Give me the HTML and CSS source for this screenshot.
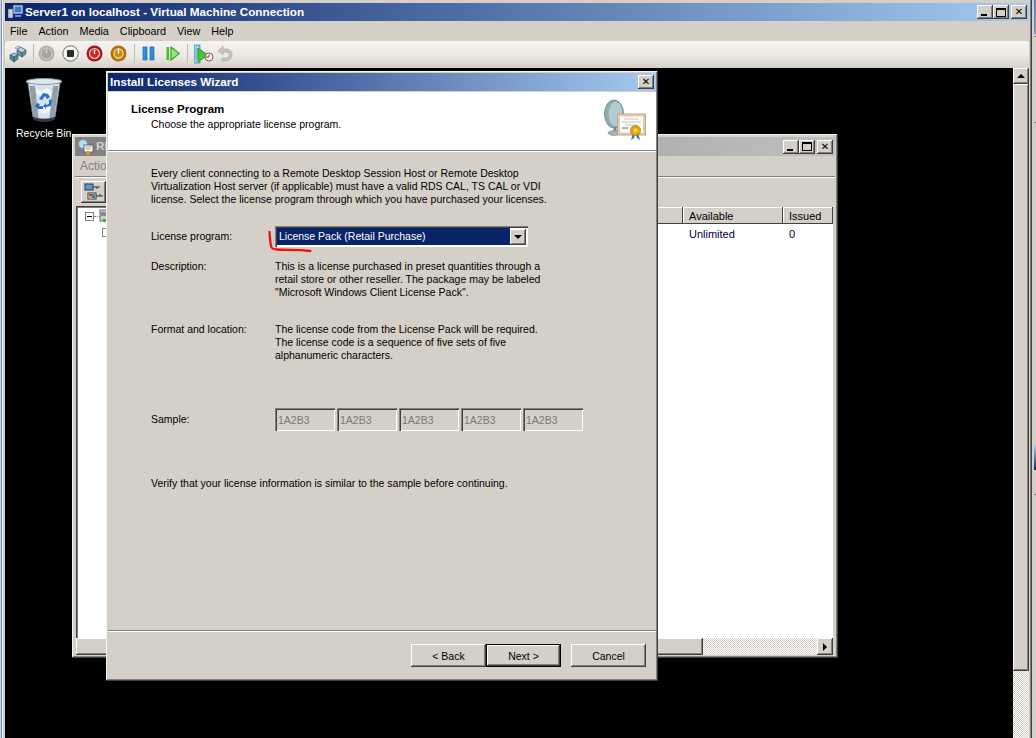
FILE: index.html
```html
<!DOCTYPE html>
<html lang="en">
<head>
<meta charset="utf-8">
<title>Server1 on localhost - Virtual Machine Connection</title>
<link rel="stylesheet" href="styles.css">
</head>
<body>
<div class="screen">
  <div class="vm">
    <div class="vm-title titlebar">
      <svg class="ico16" width="16" height="16" viewBox="0 0 16 16"><rect x="5" y="1" width="10" height="9" fill="#dfe8f5" stroke="#1c3f86"/><rect x="6.5" y="2.5" width="7" height="6" fill="#3f74c8"/><rect x="0" y="5" width="5" height="9" fill="#c8ccd4" stroke="#50586a" stroke-width=".6"/><rect x="7" y="11" width="6" height="2" fill="#88a"/></svg>
      <span class="title-text">Server1 on localhost - Virtual Machine Connection</span>
      <span class="caps">
        <button class="cap"><i class="g-min"></i></button>
        <button class="cap"><i class="g-max"></i></button>
        <button class="cap cap-x">✕</button>
      </span>
    </div>
    <div class="menubar">
      <span>File</span><span>Action</span><span>Media</span><span>Clipboard</span><span>View</span><span>Help</span>
    </div>
    <div class="toolbar">
      <svg width="18" height="18" viewBox="0 0 18 18"><path d="M1 10l4-2 4 2-4 2z" fill="#a9c4cc" stroke="#3a5a66" stroke-width=".7"/><path d="M1 10v4l4 3v-5zM9 10v4l-4 3v-5z" fill="#5e8a98" stroke="#3a5a66" stroke-width=".7"/><path d="M8 5l4-3 5 3-4 3z" fill="#b7d0d8" stroke="#3a5a66" stroke-width=".7"/><path d="M8 5v4l5 3V8zM17 5v4l-4 3V8z" fill="#6b96a4" stroke="#3a5a66" stroke-width=".7"/><path d="M6 3l3-2 2 1-3 2z" fill="#dfeaee" stroke="#3a5a66" stroke-width=".5"/></svg>
      <span class="tsep t-a"></span>
      <svg class="t-b" width="17" height="17" viewBox="0 0 17 17"><circle cx="8.5" cy="8.5" r="8" fill="#b3b2ad"/><circle cx="8.5" cy="8.5" r="5.4" fill="#a5a49f" stroke="#d0cfca"/><path d="M8.5 4.5v4" stroke="#d8d7d2" stroke-width="1.4"/></svg>
      <svg class="t-c" width="17" height="17" viewBox="0 0 17 17"><circle cx="8.5" cy="8.5" r="7.7" fill="#f4f4f2" stroke="#6b6b6b"/><rect x="5" y="5" width="7" height="7" rx="1" fill="#2a2a2a"/></svg>
      <svg class="t-c" width="17" height="17" viewBox="0 0 17 17"><circle cx="8.5" cy="8.5" r="8" fill="#a81818"/><circle cx="8.5" cy="8.5" r="5" fill="#c82a28" stroke="#f2c6c0" stroke-width="1.2"/><path d="M8.5 4.5v4.5" stroke="#fff" stroke-width="1.4"/></svg>
      <svg class="t-c" width="17" height="17" viewBox="0 0 17 17"><circle cx="8.5" cy="8.5" r="8" fill="#b86e08"/><circle cx="8.5" cy="8.5" r="4.6" fill="#d08a14" stroke="#f8e2b0" stroke-width="1.2"/><path d="M8.5 3.5v5" stroke="#fff" stroke-width="1.4"/></svg>
      <span class="tsep t-d"></span>
      <svg class="t-e" width="13" height="15" viewBox="0 0 13 15"><rect x="1" y="1" width="4" height="13" fill="#2f8fdc" stroke="#1768b0" stroke-width=".7"/><rect x="8" y="1" width="4" height="13" fill="#2f8fdc" stroke="#1768b0" stroke-width=".7"/></svg>
      <svg class="t-f" width="14" height="15" viewBox="0 0 14 15"><rect x=".5" y="1" width="2.6" height="13" fill="#46c02e"/><path d="M5 1l8.500 6.500L5 14z" fill="#9de08a" stroke="#2fa81c" stroke-width="1.2"/></svg>
      <span class="tsep t-g"></span>
      <svg class="t-h" width="20" height="20" viewBox="0 0 20 20"><rect x="0" y="1" width="6" height="18" fill="#7fc6dc" stroke="#3a8aa6" stroke-width=".7"/><path d="M1 3h4M1 17h4" stroke="#fff" stroke-dasharray="1 1"/><path d="M4 4l10 7-10 7z" fill="#4cc230" stroke="#23820f" stroke-width=".7"/><circle cx="15" cy="13" r="4" fill="#f4f4f4" stroke="#666"/><path d="M15 10.500v2.500h-3" stroke="#d22" fill="none"/></svg>
      <svg class="t-i" width="16" height="17" viewBox="0 0 16 17"><path d="M1 6l5-5v3h3c4 0 6 2.500 6 6s-3 6-7 6H5v-3h3c2.500 0 4-1 4-3s-1.500-3-3.500-3H6v3z" fill="#c6c5bf" stroke="#a4a39d" stroke-width=".6"/></svg>
    </div>
    <div class="vm-body">
      <div class="desktop">
        <div class="bin">
          <svg width="38" height="46" viewBox="0 0 38 46">
            <path d="M3 6l5 34c0 3 22 3 22 0l5-34z" fill="#d3e2ee" stroke="#7d8b94" stroke-width=".8"/>
            <path d="M4.500 9l4 30c1.500 1.500 3 2 5 2L10 9zM33.500 9l-4 30c-1.500 1.500-3 2-5 2l3.500-32z" fill="#66727a" opacity=".6"/>
            <path d="M7 38c2 5 22 5 24 0l-1 4c-3 4-19 4-22 0z" fill="#34373a"/>
            <ellipse cx="19" cy="4.500" rx="18" ry="3" fill="#dfe6ea" stroke="#8c969c"/>
            <path d="M11 12l6 2 5-3 5 4-2 5-6 1-6-3zM12 30l5-3 5 3 4-1-2 6-7 2z" fill="#f2f7fb"/>
            <path d="M14 22l4-6 5 1 2 3-3 2-2-3-3 4zM27 22l-1 7-5 1v2l-3-3 3-3v2l3-1 0-4zM12 26l3 1-1 2h4v3h-5l-3-3z" fill="#2c6fd2"/>
          </svg>
        </div>
        <div class="bin-label">Recycle Bin</div>

        <section class="win back">
          <div class="titlebar inactive">
            <svg class="back-ico" width="16" height="16" viewBox="0 0 16 16"><circle cx="5" cy="5" r="4.500" fill="#b8dcec" stroke="#6f9fb4"/><rect x="6" y="6" width="9" height="7" fill="#fff" stroke="#666"/><path d="M7.500 8h6M7.500 10h5" stroke="#99a"/><circle cx="10" cy="14" r="2" fill="#e8a010"/></svg>
            <span class="title-text">RD Licensing Manager</span>
            <span class="caps">
              <button class="cap"><i class="g-min"></i></button>
              <button class="cap"><i class="g-max"></i></button>
              <button class="cap cap-x">✕</button>
            </span>
          </div>
          <div class="back-menu"><span>Action</span></div>
          <div class="back-tools">
            <button class="tool-btn">
              <svg width="20" height="18" viewBox="0 0 20 18"><rect x="1" y="1" width="8" height="6" fill="#5a9ac8" stroke="#335"/><path d="M9 4h7M13 4v2" stroke="#333"/><rect x="4" y="10" width="8" height="6" fill="#fff" stroke="#335"/><rect x="5" y="11" width="3" height="2" fill="#d33"/><rect x="8" y="11" width="3" height="2" fill="#3a3"/><rect x="5" y="13" width="3" height="2" fill="#e8b020"/><rect x="8" y="13" width="3" height="2" fill="#36c"/><path d="M12 13h7M16 13v-2" stroke="#333"/></svg>
            </button>
          </div>
          <div class="list-pane">
            <div class="tree">
              <i class="tree-box"></i><i class="tree-dots"></i>
              <svg class="tree-ico" width="9" height="14" viewBox="0 0 9 14"><rect x="1" y="1" width="7" height="11" fill="#c8ccd0" stroke="#667"/><path d="M2 4h5M2 6h5" stroke="#445"/><rect x="4" y="10" width="3" height="3" fill="#4a4"/></svg>
              <i class="tree-child"></i>
            </div>
            <div class="list-main">
              <div class="list-head">
                <span class="col col-fill"></span>
                <span class="col col-avail">Available</span>
                <span class="col col-issued">Issued</span>
              </div>
              <div class="list-row">
                <span class="col-fill"></span>
                <span class="cell-avail">Unlimited</span>
                <span class="cell-issued">0</span>
              </div>
            </div>
          </div>
          <div class="hscroll">
            <span class="thumb"></span>
            <span class="track"></span>
            <button class="arrow-btn"><i class="tri-r"></i></button>
          </div>
        </section>

        <section class="win wizard">
          <div class="titlebar wiz-title">
            <span class="title-text">Install Licenses Wizard</span>
            <span class="caps"><button class="cap cap-x">✕</button></span>
          </div>
          <header class="wiz-head">
            <div>
              <h1>License Program</h1>
              <p>Choose the appropriate license program.</p>
            </div>
            <svg class="cert" width="44" height="42" viewBox="0 0 44 42">
              <ellipse cx="11" cy="15" rx="9.500" ry="14" fill="#8fa9b2" stroke="#76909a"/>
              <ellipse cx="12.500" cy="15" rx="7" ry="12" fill="#b4cbd3"/>
              <path d="M12 28v5" stroke="#77868c" stroke-width="3"/>
              <ellipse cx="11" cy="34" rx="6" ry="2.500" fill="#a5b3b8" stroke="#77868c" stroke-width=".6"/>
              <rect x="14.500" y="15" width="28" height="21" fill="#e2cdb0" stroke="#bda78a"/>
              <rect x="17" y="17.500" width="23" height="16" fill="#fdfcf6"/>
              <path d="M21 20h15M19 23h19M22 26h12" stroke="#b6b6c4" stroke-width=".8"/>
              <path d="M19 29h6" stroke="#7d9cc8" stroke-width="1.500"/>
              <path d="M30 34l-2 7 3-2 1-4zM35 34l2 7-3-2-1-4z" fill="#2f6fd8"/>
              <circle cx="32.500" cy="31.500" r="5" fill="#e5a60c" stroke="#b97e08" stroke-width=".8"/>
              <circle cx="32.500" cy="31.500" r="2" fill="#f6cf5c"/>
            </svg>
          </header>
          <div class="wiz-body">
            <p class="intro">Every client connecting to a Remote Desktop Session Host or Remote Desktop<br>Virtualization Host server (if applicable) must have a valid RDS CAL, TS CAL or VDI<br>license. Select the license program through which you have purchased your licenses.</p>
            <div class="row row-combo">
              <span class="label">License program:</span>
              <div class="combo">
                <span class="combo-val">License Pack (Retail Purchase)</span>
                <button class="arrow-btn"><i class="tri-d"></i></button>
              </div>
            </div>
            <div class="row row-desc">
              <span class="label">Description:</span>
              <p>This is a license purchased in preset quantities through a<br>retail store or other reseller. The package may be labeled<br>"Microsoft Windows Client License Pack".</p>
            </div>
            <div class="row row-format">
              <span class="label">Format and location:</span>
              <p>The license code from the License Pack will be required.<br>The license code is a sequence of five sets of five<br>alphanumeric characters.</p>
            </div>
            <div class="row row-sample">
              <span class="label">Sample:</span>
              <div class="samples">
                <span class="sample">1A2B3</span><span class="sample">1A2B3</span><span class="sample">1A2B3</span><span class="sample">1A2B3</span><span class="sample">1A2B3</span>
              </div>
            </div>
            <p class="verify">Verify that your license information is similar to the sample before continuing.</p>
          </div>
          <footer class="wiz-foot">
            <button class="btn">&lt; Back</button>
            <button class="btn btn-default">Next &gt;</button>
            <button class="btn btn-cancel">Cancel</button>
          </footer>
          <svg class="redmark" width="46" height="26" viewBox="0 0 46 26"><path d="M1.500 1c.3 6 .8 11 1.800 15 .6 1.800 3 2.300 6 2.500 9 .8 20-.2 33 1.500" fill="none" stroke="#f01010" stroke-width="2.300" stroke-linecap="round"/></svg>
        </section>
      </div>
      <div class="vscroll">
        <button class="arrow-btn arrow-up"><i class="tri-u"></i></button>
        <span class="vthumb"></span>
        <span class="track"></span>
      </div>
    </div>
  </div>
  <div class="edge">
    <i class="edge-blue-top"></i>
    <i class="edge-tick t1"></i>
    <i class="edge-tick t2"></i>
    <i class="edge-blue"></i>
    <i class="edge-tick t3"></i>
  </div>
</div>
</body>
</html>
```
FILE: styles.css
```css
* { box-sizing: border-box; }
html, body { margin: 0; height: 100%; overflow: hidden; }
body {
  background: #d4d0c8;
  font: 10.500px/13px "Liberation Sans", Arial, sans-serif;
  color: #000;
}
p, h1 { margin: 0; }
i { display: block; font-style: normal; }
button { font: inherit; color: inherit; padding: 0; border: 0; }

.screen { display: flex; width: 1036px; height: 738px; }

/* outer VM window */
.vm {
  width: 1032px;
  height: 738px;
  padding: 3px 3px 0 5px;
  display: flex;
  flex-direction: column;
  background: #d4d0c8;
  box-shadow: inset 1px 0 #d4d0c8, inset 2px 0 #6f95cf, inset 3px 0 #f4f4f4, inset -1px 0 #404040, inset -2px 0 #808080;
}
.titlebar {
  height: 18px;
  flex: none;
  display: flex;
  align-items: center;
  color: #fff;
  font-weight: bold;
  font-size: 11.700px;
  background: linear-gradient(90deg, #0a246a, #a6caf0);
}
.titlebar.inactive { background: linear-gradient(90deg, #808080, #c0c0c0); color: #d4d0c8; }
.title-text { white-space: nowrap; margin-top: -2px; }
.vm-title .ico16 { margin-left: 3px; margin-right: 1px; }
.caps { margin-left: auto; display: flex; padding-right: 2px; }
.cap {
  width: 16px;
  height: 14px;
  display: flex;
  align-items: center;
  justify-content: center;
  background: #d4d0c8;
  color: #000;
  font: bold 10px/14px "DejaVu Sans", sans-serif;
  box-shadow: inset -1px -1px #404040, inset 1px 1px #fff, inset -2px -2px #808080;
}
.cap-x { margin-left: 2px; }
.g-min { width: 6px; height: 2px; background: #000; margin-top: 6px; margin-right: 2px; }
.g-max { width: 10px; height: 9px; border: 1px solid #000; border-top-width: 2px; }

.menubar {
  height: 20px;
  flex: none;
  display: flex;
  align-items: center;
  gap: 11px;
  padding-left: 5px;
  font-size: 10.800px;
}
.toolbar {
  height: 27px;
  flex: none;
  position: relative;
  display: flex;
  align-items: center;
  padding: 0 0 2px 4px;
  border-radius: 3px 3px 0 0;
  background: linear-gradient(#f5f4f1, #ece9e3 55%, #d5d1c8);
}
.tsep { width: 2px; height: 19px; background: linear-gradient(90deg, #a9a69e, #fff); }
.t-a { margin-left: 6px; }
.t-b { margin-left: 3px; }
.t-c { margin-left: 7px; }
.t-d { margin-left: 7px; }
.t-e { margin-left: 6px; }
.t-f { margin-left: 11px; }
.t-g { margin-left: 7px; }
.t-h { margin-left: 5px; }
.t-i { margin-left: 3px; }

.vm-body { flex: 1; display: flex; min-height: 0; }
.desktop { flex: 1; position: relative; background: #000; overflow: hidden; }
.bin { position: absolute; left: 20px; top: 9px; }
.bin-label { position: absolute; left: 11px; top: 59px; color: #fff; white-space: nowrap; }

.vscroll { width: 16px; display: flex; flex-direction: column; }
.arrow-btn {
  width: 16px;
  height: 16px;
  flex: none;
  display: flex;
  align-items: center;
  justify-content: center;
  background: #d4d0c8;
  box-shadow: inset -1px -1px #404040, inset 1px 1px #fff, inset -2px -2px #808080;
}
.vthumb {
  height: 587px;
  flex: none;
  background: #d4d0c8;
  box-shadow: inset -1px -1px #404040, inset 1px 1px #fff, inset -2px -2px #808080;
}
.track {
  flex: 1;
  background-color: #fff;
  background-image: conic-gradient(#d4d0c8 25%, #fff 0 50%, #d4d0c8 0 75%, #fff 0);
  background-size: 2px 2px;
}
.tri-u { border: 4px solid transparent; border-top: 0; border-bottom: 4px solid #000; }
.tri-d { border: 4px solid transparent; border-bottom: 0; border-top: 4px solid #000; }
.tri-r { border: 4px solid transparent; border-right: 0; border-left: 4px solid #000; }

/* floating windows */
.win {
  position: absolute;
  display: flex;
  flex-direction: column;
  background: #d4d0c8;
  padding: 3px;
  box-shadow: inset -1px -1px #404040, inset 1px 1px #f4f4f4, inset -2px -2px #808080;
}

.back { left: 67px; top: 66px; width: 766px; height: 524px; }
.back-ico { margin: 0 2px 0 3px; }
.back .titlebar { height: 19px; }
.back .title-text { margin-right: auto; }
.back .caps { margin: 0; }
.back-menu {
  height: 21px;
  flex: none;
  padding: 4px 0 0 5px;
  color: #808080;
  font-size: 12px;
  border-bottom: 1px solid #808080;
  box-shadow: 0 1px #fff;
}
.back-tools { height: 29px; flex: none; padding: 4px 0 0 6px; }
.tool-btn {
  width: 25px;
  height: 22px;
  display: flex;
  align-items: center;
  justify-content: center;
  background: #d4d0c8;
  box-shadow: inset -1px -1px #404040, inset 1px 1px #fff, inset -2px -2px #808080;
}
.list-pane {
  flex: 1;
  display: flex;
  min-height: 0;
  margin: 0 2px 0 1px;
  background: #fff;
  box-shadow: inset 1px 1px #404040, inset 2px 2px #808080;
}
.tree { width: 100px; flex: none; position: relative; }
.tree-box { position: absolute; left: 9px; top: 6px; width: 9px; height: 9px; border: 1px solid #808080; background: linear-gradient(#000, #000) center/5px 1px no-repeat #fff; }
.tree-dots { position: absolute; left: 18px; top: 10px; width: 6px; border-top: 1px dotted #808080; }
.tree-ico { position: absolute; left: 23px; top: 3px; }
.tree-child { position: absolute; left: 26px; top: 22px; width: 4px; height: 9px; border: 1px solid #808080; border-right: 0; }
.list-main { flex: 1; display: flex; flex-direction: column; font-size: 11px; }
.list-head { height: 18px; display: flex; background: #d4d0c8; padding-top: 1px; }
.col { padding: 3px 0 0 6px; box-shadow: inset -1px -1px #404040, inset 1px 1px #fff; height: 17px; white-space: nowrap; }
.col-fill { flex: 1; }
.col-avail { width: 100px; }
.col-issued { width: 50px; }
.list-row { display: flex; padding-top: 4px; color: #000040; }
.cell-avail { width: 100px; padding-left: 6px; }
.cell-issued { width: 50px; padding-left: 6px; }
.hscroll { height: 17px; flex: none; display: flex; margin: 0 2px 0 1px; }
.hscroll .arrow-btn { height: 17px; }
.thumb {
  width: 627px;
  background: #d4d0c8;
  box-shadow: inset -1px -1px #404040, inset 1px 1px #fff, inset -2px -2px #808080;
}

.wizard { left: 101px; top: 3px; width: 552px; height: 610px; padding: 2px; }
.wiz-title .title-text { margin-left: 2px; }
.wiz-head {
  height: 59px;
  flex: none;
  display: flex;
  justify-content: space-between;
  background: #fff;
  margin-top: 1px;
  padding: 11px 9px 0 23px;
  border-bottom: 1px solid #808080;
  box-shadow: 0 1px #fff;
}
.wiz-head h1 { font-size: 11.500px; font-weight: bold; }
.wiz-head p { margin: 2px 0 0 20px; }
.cert { margin-top: -4px; }
.wiz-body { flex: 1; padding: 16px 0 0 43px; }
.row { display: flex; }
.label { width: 124px; flex: none; }
.row-combo { margin-top: 20px; align-items: center; }
.row-desc { margin-top: 13px; }
.row-format { margin-top: 24px; }
.row-sample { margin-top: 46px; align-items: center; }
.verify { margin-top: 46px; }
.combo {
  width: 253px;
  height: 21px;
  display: flex;
  align-items: center;
  padding: 2px;
  background: #fff;
  box-shadow: inset 1px 1px #808080, inset 2px 2px #404040, inset -1px -1px #fff;
}
.combo-val {
  flex: 1;
  align-self: stretch;
  background: #0a246a;
  color: #fff;
  padding: 2px 0 0 2px;
}
.samples { display: flex; gap: 2px; }
.sample {
  width: 60px;
  height: 23px;
  padding: 6px 0 0 3px;
  color: #787878;
  box-shadow: inset 1px 1px #808080, inset 2px 2px #404040, inset -1px -1px #fff;
}
.wiz-foot {
  height: 49px;
  flex: none;
  display: flex;
  align-items: flex-start;
  padding: 13px 0 0 303px;
  border-top: 1px solid #808080;
  box-shadow: inset 0 1px #fff;
}
.btn {
  width: 75px;
  height: 23px;
  padding-top: 1px;
  background: #d4d0c8;
  text-align: center;
  box-shadow: inset -1px -1px #404040, inset 1px 1px #fff, inset -2px -2px #808080;
}
.btn-default { box-shadow: inset 0 0 0 1px #000, inset -2px -2px #404040, inset 2px 2px #fff, inset -3px -3px #808080; margin-left: 0; }
.btn-cancel { margin-left: 10px; }
.redmark { position: absolute; left: 162px; top: 160px; }

/* sliver of the host desktop at the right edge */
.edge { width: 4px; height: 738px; display: flex; flex-direction: column; background: #d4d0c8; border-left: 2px solid #d4d0c8; }
.edge-blue-top { height: 34px; background: linear-gradient(#5a7fb8, #7d98c0); }
.edge-tick { height: 1px; background: #808080; }
.t1 { margin-top: 2px; }
.t2 { margin-top: 85px; }
.edge-blue { margin-top: 322px; height: 25px; background: linear-gradient(#a6caf0, #0a246a); }
.t3 { margin-top: 24px; }
```
